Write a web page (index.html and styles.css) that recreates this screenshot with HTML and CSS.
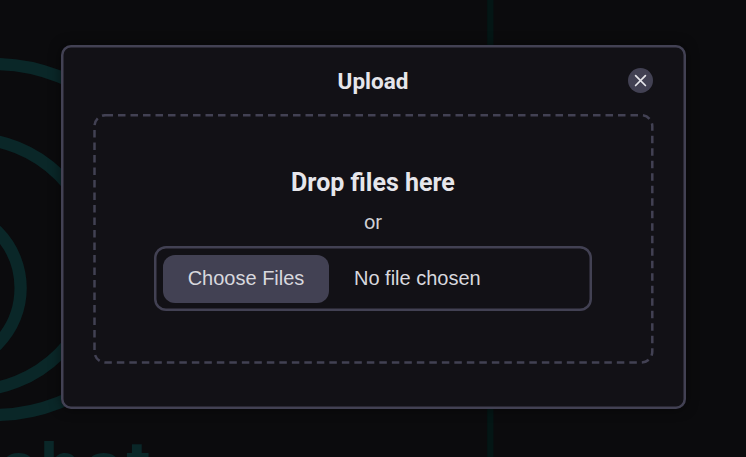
FILE: index.html
```html
<!DOCTYPE html>
<html lang="en">
<head>
<meta charset="utf-8">
<title>Upload</title>
<link rel="stylesheet" href="styles.css">
</head>
<body>
<svg class="backdrop" width="746" height="457" viewBox="0 0 746 457" aria-hidden="true">
  <g class="rings">
    <circle cx="-6" cy="239.5" r="175.5"/>
    <circle cx="-29.5" cy="264.5" r="126"/>
    <circle cx="-59" cy="288" r="79.6"/>
  </g>
  <path class="divider" d="M490.3 0V457"/>
  <text class="brand" x="-2" y="490">chat</text>
</svg>
<main class="dialog" role="dialog" aria-labelledby="title">
  <header class="header">
    <h1 class="title" id="title">Upload</h1>
    <button class="close" aria-label="Close">
      <svg width="25" height="25" viewBox="0 0 25 25"><path d="M7.6 7.7l9.8 9.8M17.4 7.7l-9.8 9.8"/></svg>
    </button>
  </header>
  <section class="drop">
    <svg class="outline" width="561" height="251" viewBox="0 0 561 251" aria-hidden="true">
      <rect x="1.5" y="1.2" width="557.8" height="247.4" rx="11"/>
    </svg>
    <h2 class="heading">Drop files here</h2>
    <p class="or">or</p>
    <input class="file" type="file" multiple aria-label="Choose Files">
  </section>
</main>
</body>
</html>
```
FILE: styles.css
```css
* { box-sizing: border-box; }
body {
  margin: 0;
  width: 746px;
  height: 457px;
  overflow: hidden;
  background: #0b0b0d;
  color: #e6e6eb;
  font-family: Roboto, sans-serif;
}
.backdrop { position: absolute; inset: 0; }
.rings { fill: none; stroke: #0a2728; stroke-width: 12.3; }
.divider { stroke: #041615; stroke-width: 6.3; }
.brand { fill: #0a2728; font: bold 67px Inter, sans-serif; letter-spacing: 2.7px; }
.dialog {
  position: relative;
  width: 625px;
  height: 364px;
  margin: 45px 0 0 61px;
  padding: 0 33px 0 32px;
  border-radius: 10px;
  background: #121116;
  box-shadow: inset 0 0 0 2.5px #424153, 0 0 12px rgba(0, 0, 0, .5);
}
.header {
  display: grid;
  grid-template-columns: 25px 1fr 25px;
  align-items: center;
  height: 69px;
}
.title { grid-column: 2; margin: 2px 0 0; text-align: center; font-size: 22.5px; font-weight: 700; }
.close { width: 25px; height: 25px; margin-top: 1px; padding: 0; border: 0; border-radius: 50%; background: #424153; }
.close svg { display: block; fill: none; stroke: #e6e6eb; stroke-width: 1.7; stroke-linecap: round; }
.drop {
  position: relative;
  display: flex;
  flex-direction: column;
  align-items: center;
  height: 251px;
  padding-top: 54px;
}
.outline { position: absolute; top: 0; left: 0; fill: none; stroke: #424153; stroke-width: 2.5; stroke-dasharray: 7.5 5; }
.heading { margin: 0 0 12px; line-height: 30px; font-size: 25px; font-weight: 700; }
.or { margin: 0 0 11px; line-height: 25px; font-size: 20px; color: #d0d0d5; }
.file {
  width: 438px;
  height: 65px;
  padding: 9px;
  border-radius: 12px;
  box-shadow: inset 0 0 0 2.5px #424153;
  color: #d8d8de;
  font: 20px "Liberation Sans", sans-serif;
}
.file::file-selector-button {
  width: 166px;
  height: 48px;
  margin: 0 25px 0 0;
  padding: 0 0 2px;
  border: 0;
  border-radius: 12px;
  background: #424153;
  color: #d8d8de;
  font: inherit;
}
```
